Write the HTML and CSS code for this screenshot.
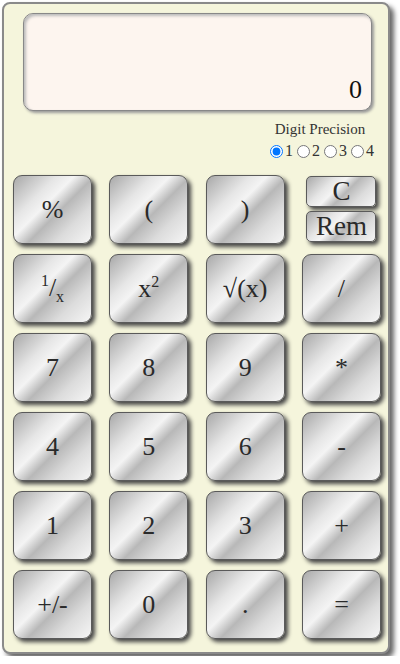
FILE: index.html
```html
<!DOCTYPE html>
<html>
<head>
<meta charset="utf-8">
<link rel="stylesheet" href="styles.css">
</head>
<body>
<div class="calc">
  <div class="display"><span class="value">0</span></div>
  <div class="prec">
    <div class="prec-box">
      <div class="prec-title">Digit Precision</div>
      <div class="prec-opts"><input type="radio" name="p" checked>1<input type="radio" name="p">2<input type="radio" name="p">3<input type="radio" name="p">4</div>
    </div>
  </div>
  <div class="keys">
    <div class="key">%</div>
    <div class="key">(</div>
    <div class="key">)</div>
    <div class="key-pair"><div class="key small">C</div><div class="key small">Rem</div></div>
    <div class="key"><span><sup>1</sup>/<sub>x</sub></span></div>
    <div class="key"><span>x<sup>2</sup></span></div>
    <div class="key">√(x)</div>
    <div class="key">/</div>
    <div class="key">7</div>
    <div class="key">8</div>
    <div class="key">9</div>
    <div class="key">*</div>
    <div class="key">4</div>
    <div class="key">5</div>
    <div class="key">6</div>
    <div class="key">-</div>
    <div class="key">1</div>
    <div class="key">2</div>
    <div class="key">3</div>
    <div class="key">+</div>
    <div class="key">+/-</div>
    <div class="key">0</div>
    <div class="key">.</div>
    <div class="key">=</div>
  </div>
</div>
</body>
</html>
```
FILE: styles.css
```css
body {
  margin: 0;
  background: #ffffff;
  font-family: "Liberation Serif", "Times New Roman", serif;
}
.calc {
  margin: 2px;
  width: 388px;
  height: 652px;
  box-sizing: border-box;
  border: 2px solid #8a8a8a;
  border-radius: 8px;
  background: #f5f5dc;
  box-shadow: 4px 4px 5px #666;
  padding-top: 9px;
}
.display {
  margin-left: 19px;
  width: 349px;
  height: 98px;
  box-sizing: border-box;
  border: 1px solid #888;
  border-radius: 10px;
  background: #fdf5ef;
  box-shadow: inset 2px 2px 3px #bbb, 2px 2px 3px #999;
  display: flex;
  align-items: flex-end;
  justify-content: flex-end;
  padding: 0 9px 5px 0;
  font-size: 26px;
  color: #111;
}
.prec {
  height: 64px;
  box-sizing: border-box;
  padding: 8px 14px 0 0;
  display: flex;
  justify-content: flex-end;
}
.prec-box {
  text-align: center;
  font-size: 15px;
  color: #333;
  line-height: 20px;
}
.prec-opts {
  margin-top: 2px;
  font-size: 16px;
}
.prec-opts input {
  margin: 3px 2px 0 4px;
  width: 13px;
  height: 13px;
  vertical-align: -2px;
}
.keys {
  margin-left: 9px;
  display: grid;
  grid-template-columns: repeat(4, 79px);
  grid-auto-rows: 69px;
  column-gap: 17.33px;
  row-gap: 10px;
}
.key {
  box-sizing: border-box;
  border: 1px solid #5a5a5a;
  border-radius: 9px;
  background: linear-gradient(135deg, #a8a8a8 0%, #e6e6e6 30%, #f4f4f4 42%, #b8b8b8 56%, #dcdcdc 75%, #f6f6f6 100%);
  box-shadow: 3px 3px 4px #444;
  display: flex;
  align-items: center;
  justify-content: center;
  font-size: 26px;
  color: #2a2a2a;
}
.key sup, .key sub {
  font-size: 16px;
}
.key-pair {
  display: flex;
  flex-direction: column;
  align-items: center;
  gap: 4px;
  padding-top: 1px;
}
.key.small {
  width: 70px;
  height: 31px;
  border-radius: 5px;
  font-size: 27px;
  line-height: 1;
}
```
